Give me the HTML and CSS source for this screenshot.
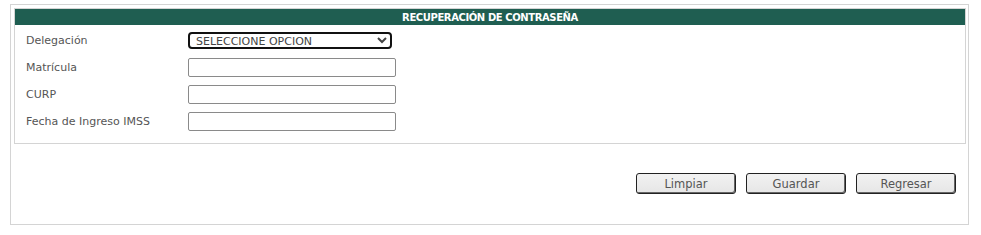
FILE: index.html
```html
<!DOCTYPE html>
<html lang="es">
<head>
    <meta charset="UTF-8">
    <title>Recuperación de contraseña</title>
    <link rel="stylesheet" href="styles.css">
</head>
<body>

<div class="recovery-box">
    <div class="recovery-form">
        <div class="form-title">RECUPERACIÓN DE CONTRASEÑA</div>
        <div class="form-rows">
            <label for="delegacion">Delegación</label>
            <select id="delegacion" class="form-select">
                <option>SELECCIONE OPCION</option>
            </select>

            <label for="matricula">Matrícula</label>
            <input type="text" id="matricula" class="form-input">

            <label for="curp">CURP</label>
            <input type="text" id="curp" class="form-input">

            <label for="fechaIngreso">Fecha de Ingreso IMSS</label>
            <input type="text" id="fechaIngreso" class="form-input">
        </div>
    </div>

    <div class="form-actions">
        <button type="button" class="form-button">Limpiar</button>
        <button type="button" class="form-button">Guardar</button>
        <button type="button" class="form-button">Regresar</button>
    </div>
</div>

</body>
</html>
```

FILE: styles.css
```css
body {
    margin: 0;
    padding: 4px 12px 0 10px;
    font-family: "DejaVu Sans", Verdana, sans-serif;
    background-color: #fff;
    color: #333;
}
.recovery-box {
    border: 1px solid #d4d4d4;
    padding: 3px 2px 30px 3px;
}
.recovery-form {
    border: 1px solid #d4d4d4;
    padding-bottom: 8px;
}
.form-title {
    background-color: #1f5e51;
    color: #fff;
    font-size: 10px;
    font-weight: bold;
    text-align: center;
    height: 16px;
    line-height: 17px;
    letter-spacing: -0.4px;
}
.form-rows {
    display: grid;
    grid-template-columns: 162px 208px;
    grid-auto-rows: 27px;
    align-items: center;
    padding: 2px 0 0 11px;
    font-size: 11px;
}
.form-rows label {
    color: #555;
}
.form-select {
    width: 204px;
    height: 17px;
    border: 2px solid #111;
    border-radius: 4px;
    font-family: "DejaVu Sans", Verdana, sans-serif;
    font-size: 11px;
    color: #444;
    padding: 0 2px;
    background-color: #fff;
}
.form-input {
    width: 208px;
    height: 19px;
    box-sizing: border-box;
    border: 1px solid #8a8a8a;
    border-radius: 2px;
    font-size: 11px;
}
.form-actions {
    display: flex;
    justify-content: flex-end;
    gap: 10px;
    margin: 29px 10px 0 0;
}
.form-button {
    width: 100px;
    height: 21px;
    background: linear-gradient(#f2f2f2, #e6e6e6);
    border: 1px solid #222;
    border-radius: 3px;
    box-shadow: inset -1px -1px 0 #666;
    font-family: "DejaVu Sans", Verdana, sans-serif;
    font-size: 11.5px;
    color: #555;
    padding: 0;
}
```
